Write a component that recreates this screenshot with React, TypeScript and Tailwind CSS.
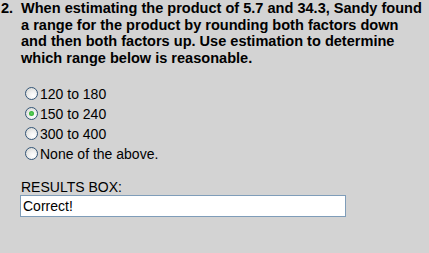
import React from "react";

const options = [
  { label: "120 to 180", checked: false },
  { label: "150 to 240", checked: true },
  { label: "300 to 400", checked: false },
  { label: "None of the above.", checked: false },
];

function Radio({ checked }: { checked: boolean }) {
  return (
    <span className="relative inline-block w-[13px] h-[13px] rounded-full border border-[#335577] bg-[radial-gradient(circle_at_65%_70%,#ffffff_0%,#f0f0f0_40%,#d2d2cc_100%)] shrink-0">
      {checked && (
        <span className="absolute left-[3px] top-[3px] w-[5px] h-[5px] rounded-full bg-[radial-gradient(circle,#5fd35f_0%,#21a121_100%)]" />
      )}
    </span>
  );
}

export default function App() {
  return (
    <div className="w-[429px] h-[253px] bg-[#d3d3d3] text-black font-['Liberation_Sans',Arial,sans-serif] overflow-hidden">
      <div className="flex text-[14.55px] leading-[16.67px] font-bold">
        <div className="w-[21px] pl-[1px] shrink-0">2.</div>
        <div className="pr-[2px]">
          When estimating the product of 5.7 and 34.3, Sandy found a range for the product by rounding both factors down and then both factors up. Use estimation to determine which range below is reasonable.
        </div>
      </div>
      <div className="flex flex-col pl-[25px] mt-[17px] text-[14px] leading-[20px]">
        {options.map((o) => (
          <div key={o.label} className="flex items-center h-[20px] gap-[2px]">
            <Radio checked={o.checked} />
            <span>{o.label}</span>
          </div>
        ))}
      </div>
      <div className="pl-[21px] mt-[15px] text-[14px] leading-[16px]">RESULTS BOX:</div>
      <div className="pl-[20px]">
        <div className="w-[326px] h-[22px] bg-white border border-[#7f9db9] text-[14px] leading-[20px] pl-[2px]">
          Correct!
        </div>
      </div>
    </div>
  );
}
